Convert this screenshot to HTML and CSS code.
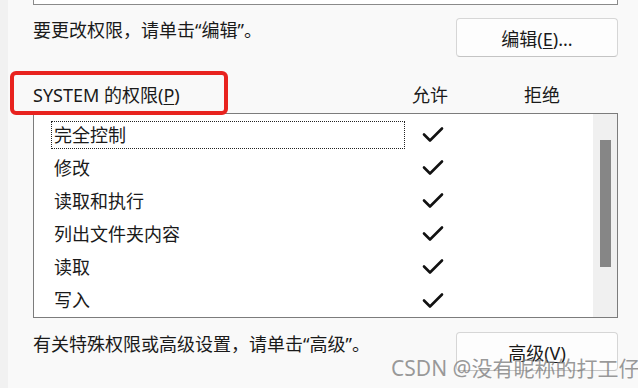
FILE: index.html
```html
<!DOCTYPE html>
<html lang="zh-CN">
<head>
    <meta charset="UTF-8">
    <meta name="viewport" content="width=device-width, initial-scale=1.0">
    <title>安全 - 权限</title>
    <link rel="stylesheet" href="styles.css">
</head>
<body>

<div class="dialog">
    <div class="edge"></div>

    <div class="main">
        <!-- 上方的用户列表（只露出底边） -->
        <div class="prev-list"></div>

        <div class="action-row">
            <p class="hint">要更改权限，请单击“编辑”。</p>
            <button class="btn">编辑(<u>E</u>)...</button>
        </div>

        <!-- 权限表头 -->
        <div class="perm-header">
            <span class="perm-title">SYSTEM 的权限(<u>P</u>)</span>
            <span class="col">允许</span>
            <span class="col deny">拒绝</span>
            <span class="highlight"></span>
        </div>

        <!-- 权限列表 -->
        <div class="perm-list">
            <ul class="rows">
                <li class="row">
                    <span class="name focused">完全控制</span>
                    <span class="check"><svg viewBox="0 0 22 17" width="22" height="17"><path d="M2 8.5 L8 14.5 L20 2.5"/></svg></span>
                </li>
                <li class="row">
                    <span class="name">修改</span>
                    <span class="check"><svg viewBox="0 0 22 17" width="22" height="17"><path d="M2 8.5 L8 14.5 L20 2.5"/></svg></span>
                </li>
                <li class="row">
                    <span class="name">读取和执行</span>
                    <span class="check"><svg viewBox="0 0 22 17" width="22" height="17"><path d="M2 8.5 L8 14.5 L20 2.5"/></svg></span>
                </li>
                <li class="row">
                    <span class="name">列出文件夹内容</span>
                    <span class="check"><svg viewBox="0 0 22 17" width="22" height="17"><path d="M2 8.5 L8 14.5 L20 2.5"/></svg></span>
                </li>
                <li class="row">
                    <span class="name">读取</span>
                    <span class="check"><svg viewBox="0 0 22 17" width="22" height="17"><path d="M2 8.5 L8 14.5 L20 2.5"/></svg></span>
                </li>
                <li class="row">
                    <span class="name">写入</span>
                    <span class="check"><svg viewBox="0 0 22 17" width="22" height="17"><path d="M2 8.5 L8 14.5 L20 2.5"/></svg></span>
                </li>
            </ul>
            <div class="scrollbar">
                <div class="thumb"></div>
            </div>
        </div>

        <div class="action-row bottom">
            <p class="hint">有关特殊权限或高级设置，请单击“高级”。</p>
            <button class="btn">高级(<u>V</u>)</button>
        </div>
    </div>

    <div class="watermark">CSDN @没有昵称的打工仔</div>
</div>

</body>
</html>
```

FILE: styles.css
```css
body {
    margin: 0;
    padding: 0;
    background-color: #f9f9f9;
    color: #1a1a1a;
    font-family: "Noto Sans", "Noto Sans CJK SC", sans-serif;
    font-size: 18px;
    overflow: hidden;
}
.dialog {
    position: relative;
    display: flex;
    width: 638px;
    height: 388px;
}
.edge {
    width: 8px;
    background-color: #f1f1f1;
}
.main {
    width: 585px;
    padding-left: 25px;
}
.prev-list {
    height: 4px;
    border: 1px solid #8a8a8a;
    border-top: none;
    background-color: #fff;
}
.action-row {
    display: flex;
    justify-content: space-between;
    align-items: flex-start;
    margin-top: 13px;
}
.action-row.bottom {
    margin-top: 14px;
}
.hint {
    margin: 0;
    line-height: 24px;
}
.btn {
    width: 162px;
    height: 39px;
    padding: 0;
    font-family: inherit;
    font-size: 18px;
    color: #1a1a1a;
    background-color: #fdfdfd;
    border: 1px solid #d6d6d6;
    border-bottom-color: #c4c4c4;
    border-radius: 4px;
}
.btn u, .perm-title u {
    text-underline-offset: 2px;
    text-decoration-thickness: 1px;
}
.perm-header {
    position: relative;
    display: grid;
    grid-template-columns: 362px 70px 42px 70px;
    margin-top: 26px;
    line-height: 24px;
}
.perm-header .col {
    text-align: center;
}
.perm-header .deny {
    grid-column: 4;
}
.highlight {
    position: absolute;
    left: -23px;
    top: -12px;
    width: 210px;
    height: 36px;
    border: 4px solid #e8231f;
    border-radius: 6px;
}
.perm-list {
    display: flex;
    height: 203px;
    margin-top: 6px;
    border: 1px solid #7c7c7c;
    background-color: #fff;
}
.rows {
    flex: 1;
    list-style: none;
    margin: 0;
    padding: 4px 0 0 0;
}
.row {
    display: grid;
    grid-template-columns: 17px 354px 56px;
    align-items: center;
    height: 33.1px;
}
.name {
    grid-column: 2;
    height: 26px;
    line-height: 26px;
    padding-left: 2px;
    border: 1px dotted transparent;
}
.name.focused {
    border-color: #222;
}
.check {
    grid-column: 3;
    display: flex;
    justify-content: center;
}
.check svg path {
    fill: none;
    stroke: #111;
    stroke-width: 2.6;
    stroke-linecap: round;
    stroke-linejoin: round;
}
.scrollbar {
    width: 24px;
    padding-top: 26px;
    background-color: #f0f0f0;
}
.thumb {
    width: 11px;
    height: 127px;
    margin-left: 7px;
    background-color: #868686;
}
.watermark {
    position: absolute;
    left: 391px;
    top: 355px;
    font-size: 21px;
    line-height: 26px;
    color: rgba(120, 120, 120, 0.75);
    white-space: nowrap;
}
```
